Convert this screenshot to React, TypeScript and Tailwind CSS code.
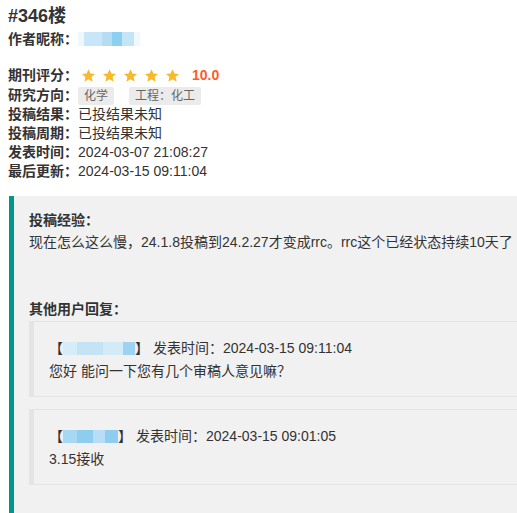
import React from "react";

const font = { fontFamily: '"Liberation Sans", "Noto Sans CJK SC", sans-serif' };

const Star = () => (
  <span className="flex h-[19px] w-[21px] items-center justify-center">
    <svg width="15" height="15" viewBox="0 0 24 24">
      <path
        d="M12 1.8l3.1 6.9 7.4.7-5.6 5 1.7 7.4L12 18l-6.6 3.8 1.7-7.4-5.6-5 7.4-.7z"
        fill="#f7ba2a"
      />
    </svg>
  </span>
);

type Reply = { blocks: string[]; time: string; text: string };

const replies: Reply[] = [
  {
    blocks: ["bg-[#d6ecf8] w-[14px]", "bg-[#c4e4f6] w-[26px]", "bg-[#d3eaf7] w-[20px]", "bg-[#9dd3f1] w-[12px]"],
    time: "2024-03-15 09:11:04",
    text: "您好 能问一下您有几个审稿人意见嘛？",
  },
  {
    blocks: ["bg-[#a6d8f3] w-[14px]", "bg-[#8fcdef] w-[16px]", "bg-[#b7def4] w-[12px]", "bg-[#8ecdef] w-[13px]"],
    time: "2024-03-15 09:01:05",
    text: "3.15接收",
  },
];

const Blur = ({ blocks, h }: { blocks: string[]; h: string }) => (
  <span className={`inline-flex ${h} align-middle blur-[0.6px]`}>
    {blocks.map((b, i) => (
      <span key={i} className={`h-full ${b}`} />
    ))}
  </span>
);

const InfoRow = ({ label, children }: { label: string; children: React.ReactNode }) => (
  <div className="flex h-[19px] items-center leading-[19px]">
    <span className="font-bold">{label}</span>
    {children}
  </div>
);

export default function App() {
  return (
    <div className="h-[513px] w-[517px] overflow-hidden bg-white text-[14px] text-[#333]" style={font}>
      <div className="pl-2">
        <h1 className="mt-1 text-[18px] font-bold leading-[24px]">#346楼</h1>
        <div className="flex h-[22px] items-center">
          <span className="font-bold">作者昵称：</span>
          <Blur
            h="h-[14px]"
            blocks={["bg-[#eef7fc] w-[6px]", "bg-[#c8e6f7] w-[18px]", "bg-[#b5dcf3] w-[10px]", "bg-[#8ccff1] w-[10px]", "bg-[#c4e5f6] w-[12px]", "bg-[#f0f8fd] w-[6px]"]}
          />
        </div>

        <div className="mt-[14px] flex h-[22px] items-center">
          <span className="font-bold">期刊评分：</span>
          <span className="flex">
            <Star />
            <Star />
            <Star />
            <Star />
            <Star />
          </span>
          <span className="ml-[9px] font-bold text-[#ff5a2a]">10.0</span>
        </div>
        <div className="flex h-[19px] items-center">
          <span className="font-bold">研究方向：</span>
          <span className="flex gap-[15px]">
            <span className="rounded-[2px] bg-[#ebebeb] px-[6px] text-[12px] leading-[18px] text-[#666]">化学</span>
            <span className="rounded-[2px] bg-[#ebebeb] px-[6px] text-[12px] leading-[18px] text-[#666]">工程：化工</span>
          </span>
        </div>
        <InfoRow label="投稿结果：">
          <span>已投结果未知</span>
        </InfoRow>
        <InfoRow label="投稿周期：">
          <span>已投结果未知</span>
        </InfoRow>
        <InfoRow label="发表时间：">
          <span>2024-03-07 21:08:27</span>
        </InfoRow>
        <InfoRow label="最后更新：">
          <span>2024-03-15 09:11:04</span>
        </InfoRow>
      </div>

      <div className="ml-[9px] mt-[15px] border-l-[5px] border-[#009688] bg-[#f1f1f1] pb-12 pl-[15px] pt-[15px]">
        <div className="font-bold leading-[19px]">投稿经验：</div>
        <div className="mt-[3px] whitespace-nowrap leading-[19px]">
          现在怎么这么慢，24.1.8投稿到24.2.27才变成rrc。rrc这个已经状态持续10天了
        </div>

        <div className="mt-[48px] font-bold leading-[19px]">其他用户回复：</div>
        <div className="mt-[2px] flex flex-col gap-[12px]">
          {replies.map((r, i) => (
            <div
              key={i}
              className="border-y border-l-[5px] border-[#e4e4e4] pb-[13px] pl-[15px] pt-[15px] leading-[23px]"
            >
              <div className="flex items-center whitespace-nowrap">
                <span>【</span>
                <Blur h="h-[13px]" blocks={r.blocks} />
                <span>】</span>
                <span className="ml-1">发表时间：{r.time}</span>
              </div>
              <div>{r.text}</div>
            </div>
          ))}
        </div>
      </div>
    </div>
  );
}
